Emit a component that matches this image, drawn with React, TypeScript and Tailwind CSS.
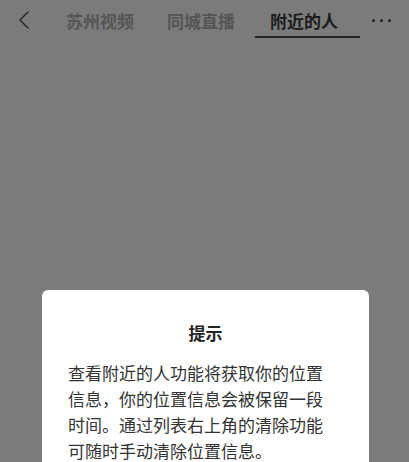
import { ChevronLeft } from 'lucide-react';

const tabs = [
  { label: '苏州视频', active: false },
  { label: '同城直播', active: false },
  { label: '附近的人', active: true },
];

export default function App() {
  return (
    <div
      className="h-[462px] w-[409px] overflow-hidden bg-[#7b7b7b]"
      style={{ fontFamily: '"Noto Sans CJK SC", "Noto Sans", sans-serif' }}
    >
      <header className="flex h-10 items-center">
        <div className="flex w-[66px] items-center pl-[8px] text-[#2a2a2a]">
          <ChevronLeft size={32} strokeWidth={1.2} />
        </div>
        <div className="flex items-center gap-[33px]">
          {tabs.slice(0, 2).map((tab) => (
            <span key={tab.label} className="text-[17px] font-bold leading-none text-[#555555]">
              {tab.label}
            </span>
          ))}
        </div>
        <div className="relative ml-[20px] flex h-10 w-[105px] items-center pl-[15px]">
          <span className="text-[17px] font-bold leading-none text-[#1c1c1c]">{tabs[2].label}</span>
          <div className="absolute bottom-[2px] left-0 h-[2px] w-full bg-[#222222]" />
        </div>
        <div className="ml-[12px] flex items-center gap-[5px]">
          <span className="h-[3px] w-[3px] rounded-full bg-[#222222]" />
          <span className="h-[3px] w-[3px] rounded-full bg-[#222222]" />
          <span className="h-[3px] w-[3px] rounded-full bg-[#222222]" />
        </div>
      </header>

      <div className="ml-[42px] mt-[250px] h-[200px] w-[327px] rounded-t-[6px] bg-white pt-[30px]">
        <h2 className="text-center text-[17px] font-bold leading-[26px] text-[#222222]">提示</h2>
        <p className="mt-[14px] w-[284px] pl-[26px] text-[17px] leading-[26px] text-[#333333]">
          查看附近的人功能将获取你的位置信息，你的位置信息会被保留一段时间。通过列表右上角的清除功能可随时手动清除位置信息。
        </p>
      </div>
    </div>
  );
}
